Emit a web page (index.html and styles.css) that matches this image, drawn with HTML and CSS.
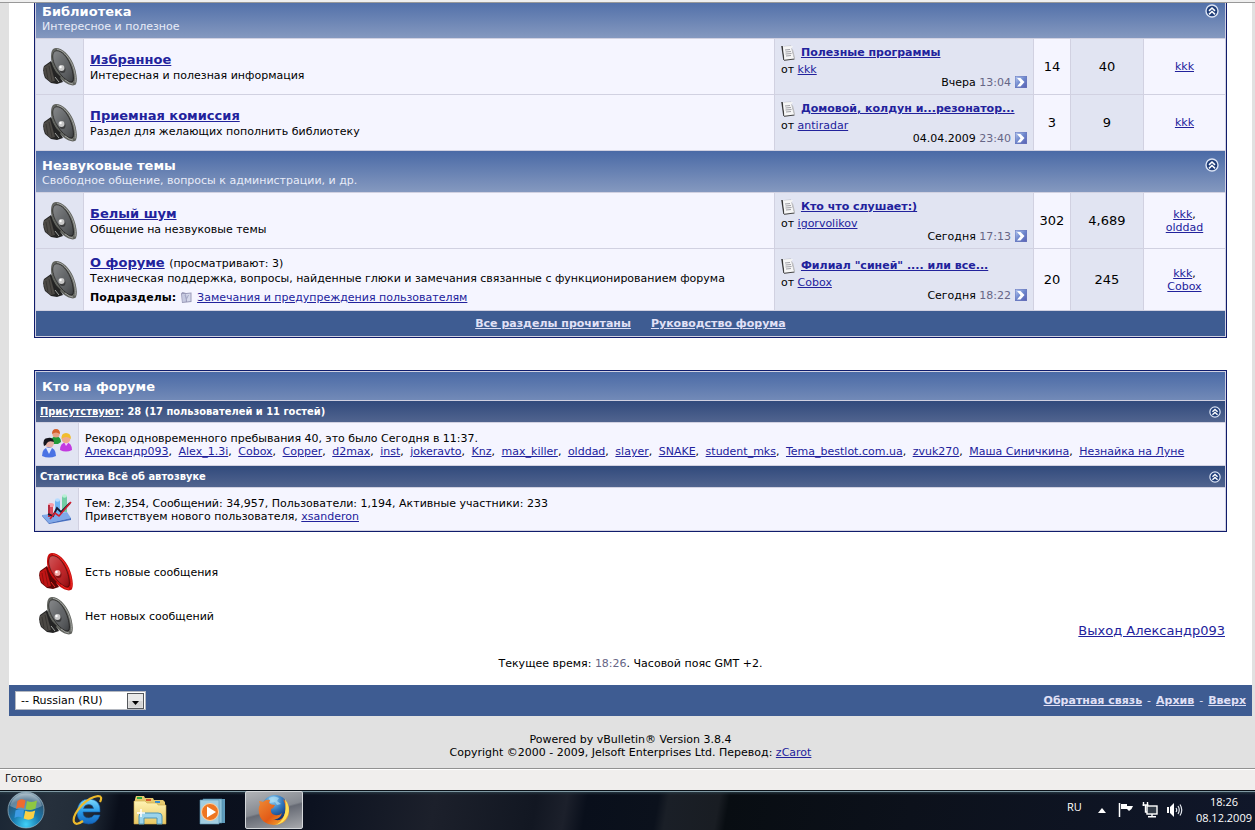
FILE: index.html
```html
<!DOCTYPE html>
<html lang="ru">
<head>
<meta charset="utf-8">
<title>Всё об автозвуке</title>
<link rel="stylesheet" href="styles.css">
</head>
<body>
<svg class="sprites" aria-hidden="true">
  <defs>
    <linearGradient id="cone" x1="0" y1="0" x2="1" y2="1">
      <stop offset="0" stop-color="#fff" stop-opacity=".32"/><stop offset=".5" stop-color="#fff" stop-opacity=".12"/><stop offset="1" stop-color="#000" stop-opacity=".25"/>
    </linearGradient>
    <linearGradient id="go" x1="0" y1="0" x2="1" y2="1">
      <stop offset="0" stop-color="#b4c8f0"/><stop offset=".5" stop-color="#6d86cc"/><stop offset="1" stop-color="#5a62b4"/>
    </linearGradient>
    <radialGradient id="orb" cx=".5" cy=".9" r=".85">
      <stop offset="0" stop-color="#3fd0f8"/><stop offset=".45" stop-color="#1878ad"/><stop offset=".8" stop-color="#2b5878"/><stop offset="1" stop-color="#8aa4b4"/>
    </radialGradient>
    <linearGradient id="ie" x1="0" y1="0" x2="0" y2="1">
      <stop offset="0" stop-color="#7fdcff"/><stop offset=".5" stop-color="#2a9be6"/><stop offset="1" stop-color="#1466bd"/>
    </linearGradient>
    <linearGradient id="folder" x1="0" y1="0" x2="0" y2="1">
      <stop offset="0" stop-color="#fff3b4"/><stop offset="1" stop-color="#e8c763"/>
    </linearGradient>
    <radialGradient id="globe" cx=".4" cy=".2" r=".8">
      <stop offset="0" stop-color="#8ed2f5"/><stop offset=".5" stop-color="#3277bd"/><stop offset="1" stop-color="#122c6c"/>
    </radialGradient>
    <linearGradient id="fox" x1="0" y1="0" x2="1" y2="1">
      <stop offset="0" stop-color="#ef8b36"/><stop offset=".55" stop-color="#e25a16"/><stop offset="1" stop-color="#f8c43a"/>
    </linearGradient>
  </defs>
  <symbol id="speaker" viewBox="0 0 34 38">
    <path class="spk-dark" d="M1 18 8 13 20 34 14 36 8 35 2 30Q-1 23 1 18Z"/>
    <path class="spk-mid" d="M1 19 7 15 12 33 8 34 3 30Q0 24 1 19Z"/>
    <path d="M3 20 5 31M6 18 9 33" stroke="#000" stroke-opacity=".25" fill="none"/>
    <path class="spk-rim" d="M13 0C20 0 26 7 30 15C33 22 35 31 33 36C31 39 25 37 20 33C13 27 8 17 8 9C8 4 9 0 13 0Z"/>
    <path class="spk-edge" fill="none" d="M14 1.500C20 2 25 8 29 16C32 23 33 30 32 34.500"/>
    <path class="spk-cone" d="M14 3C19 3 24 9 27 16C30 23 31 30 30 33C28 36 23 32 19 28C14 22 10 15 10 9C10 5 11 3 14 3Z"/>
    <path fill="url(#cone)" d="M14 3C19 3 24 9 27 16C30 23 31 30 30 33C28 36 23 32 19 28C14 22 10 15 10 9C10 5 11 3 14 3Z"/>
    <path class="spk-dark" d="M10 19 13 24 18 29 15 31Q11 26 10 19Z"/>
    <ellipse class="spk-dark" cx="19.500" cy="21.500" rx="3" ry="3.500" fill-opacity=".6"/>
    <circle class="spk-dome" cx="18.500" cy="20" r="3"/>
    <circle cx="17.500" cy="19" r="1.200" fill="#fff"/>
    <path class="spk-edge" fill="none" d="M12 29 16 34 M22 32Q27 36 30 36"/>
  </symbol>
  <symbol id="collapse" viewBox="0 0 14 14">
    <circle cx="7" cy="7" r="6" fill="#1f3d78" stroke="#dce4f4" stroke-width="1.400"/>
    <path d="M4 6.800 7 4 10 6.800M4 10.300 7 7.500 10 10.300" fill="none" stroke="#fff" stroke-width="1.600"/>
  </symbol>
  <symbol id="doc" viewBox="0 0 15 16">
    <path d="M1 1 3 15" stroke="#333" stroke-width="1.500"/>
    <path d="M3 1.500 10 1 13 14 3.500 15Z" fill="#fff" stroke="#a8a8ae" stroke-width=".7"/>
    <path d="M2 1.500 12 1 10 4 12 11 13.500 14 3.500 15.200Z" fill="#f6f6f6"/>
    <path d="M4 5 9 4.500M4.500 7 10 6.500M4.500 9 10.500 8.500M5 11 10 10.500" stroke="#a0a0a6"/>
    <path d="M3 15.300 13.500 14" stroke="#444" stroke-width="1"/>
    <path d="M11.500 4.500 13.500 13" stroke="#bbb"/>
  </symbol>
  <symbol id="goto" viewBox="0 0 12 12">
    <rect width="12" height="12" fill="#6b78bc"/><rect x=".5" y=".5" width="11" height="11" fill="url(#go)"/>
    <path d="M2 2H5.500L9.500 6 5.500 10.500H2L5.500 6.200Z" fill="#fff"/>
  </symbol>
  <symbol id="subforum" viewBox="0 0 11 11">
    <path d="M0 1.500 1.500 0 5 1 10.500.500V10L1 11Z" fill="#9a9ab8"/>
    <path d="M1 2 4.500 2 5 9.500 1.500 10Z" fill="#c6c9e0"/><path d="M5 2 9.500 1.500 9.500 9 6 9.500Z" fill="#d5d8ea"/>
    <path d="M4 3 5.500 7 7.500 3" fill="none" stroke="#a3a7c6"/>
  </symbol>
</svg>

<main class="viewport">
  <div class="page">
    <table class="forum boards">
      <colgroup><col class="c-icon"><col><col class="c-last"><col class="c-themes"><col class="c-posts"><col class="c-mod"></colgroup>
      <tbody>
        <tr><th class="tcat" colspan="6"><div class="cat-head"><div><h2>Библиотека</h2><p>Интересное и полезное</p></div><button class="collapse" aria-label="Свернуть"><svg><use href="#collapse"/></svg></button></div></th></tr>
        <tr class="board">
          <td class="alt2 status"><svg class="speaker"><use href="#speaker"/></svg></td>
          <td class="alt1 about"><div class="name"><a href="#">Избранное</a></div><div>Интересная и полезная информация</div></td>
          <td class="alt2 last"><div class="topic"><svg><use href="#doc"/></svg><a href="#">Полезные программы</a></div><div class="author">от <a href="#">kkk</a></div><div class="when"><span>Вчера <time>13:04</time></span><a href="#" aria-label="К последнему сообщению"><svg><use href="#goto"/></svg></a></div></td>
          <td class="alt1 num">14</td><td class="alt2 num">40</td><td class="alt1 mod"><a href="#">kkk</a></td>
        </tr>
        <tr class="board">
          <td class="alt2 status"><svg class="speaker"><use href="#speaker"/></svg></td>
          <td class="alt1 about"><div class="name"><a href="#">Приемная комиссия</a></div><div>Раздел для желающих пополнить библиотеку</div></td>
          <td class="alt2 last"><div class="topic"><svg><use href="#doc"/></svg><a href="#">Домовой, колдун и...резонатор...</a></div><div class="author">от <a href="#">antiradar</a></div><div class="when"><span>04.04.2009 <time>23:40</time></span><a href="#" aria-label="К последнему сообщению"><svg><use href="#goto"/></svg></a></div></td>
          <td class="alt1 num">3</td><td class="alt2 num">9</td><td class="alt1 mod"><a href="#">kkk</a></td>
        </tr>
      </tbody>
      <tbody>
        <tr><th class="tcat" colspan="6"><div class="cat-head"><div><h2>Незвуковые темы</h2><p>Свободное общение, вопросы к администрации, и др.</p></div><button class="collapse" aria-label="Свернуть"><svg><use href="#collapse"/></svg></button></div></th></tr>
        <tr class="board">
          <td class="alt2 status"><svg class="speaker"><use href="#speaker"/></svg></td>
          <td class="alt1 about"><div class="name"><a href="#">Белый шум</a></div><div>Общение на незвуковые темы</div></td>
          <td class="alt2 last"><div class="topic"><svg><use href="#doc"/></svg><a href="#">Кто что слушает:)</a></div><div class="author">от <a href="#">igorvolikov</a></div><div class="when"><span>Сегодня <time>17:13</time></span><a href="#" aria-label="К последнему сообщению"><svg><use href="#goto"/></svg></a></div></td>
          <td class="alt1 num">302</td><td class="alt2 num">4,689</td><td class="alt1 mod"><a href="#">kkk</a>,<br><a href="#">olddad</a></td>
        </tr>
        <tr class="board tall">
          <td class="alt2 status"><svg class="speaker"><use href="#speaker"/></svg></td>
          <td class="alt1 about"><div class="name"><a href="#">О форуме</a> <span>(просматривают: 3)</span></div><div>Техническая поддержка, вопросы, найденные глюки и замечания связанные с функционированием форума</div><div class="sub"><b>Подразделы:</b><svg><use href="#subforum"/></svg><a href="#">Замечания и предупреждения пользователям</a></div></td>
          <td class="alt2 last"><div class="topic"><svg><use href="#doc"/></svg><a href="#">Филиал "синей" .... или все...</a></div><div class="author">от <a href="#">Cobox</a></div><div class="when"><span>Сегодня <time>18:22</time></span><a href="#" aria-label="К последнему сообщению"><svg><use href="#goto"/></svg></a></div></td>
          <td class="alt1 num">20</td><td class="alt2 num">245</td><td class="alt1 mod"><a href="#">kkk</a>,<br><a href="#">Cobox</a></td>
        </tr>
      </tbody>
      <tfoot>
        <tr><td class="tfoot" colspan="6"><div class="foot-links"><a href="#">Все разделы прочитаны</a><a href="#">Руководство форума</a></div></td></tr>
      </tfoot>
    </table>

    <table class="forum online">
      <colgroup><col class="c-small"><col></colgroup>
      <tbody>
        <tr><th class="tcat title" colspan="2"><h2>Кто на форуме</h2></th></tr>
        <tr><th class="thead" colspan="2"><div class="bar"><span><a href="#">Присутствуют</a>: 28 (17 пользователей и 11 гостей)</span><button class="collapse small" aria-label="Свернуть"><svg><use href="#collapse"/></svg></button></div></th></tr>
        <tr>
          <td class="alt2 status"><svg class="pic" viewBox="0 0 30 30">
            <path d="M9 13Q9 8 14 7Q19 8 19 13L16 15H11Z" fill="#239b3a"/><circle cx="14" cy="5" r="3.600" fill="#e8a184"/><path d="M10 5Q10 0 14 0Q18 0 18 5Q14 2 10 5Z" fill="#d5602a"/>
            <path d="M18 21Q18 14 24 13Q30 14 30 21Q24 24 18 21Z" fill="#c23ae0"/><path d="M22 13 24 17 27 13Z" fill="#f4c8ff"/><circle cx="24" cy="10" r="4.300" fill="#efa98e"/><path d="M19.500 10Q19 4 24 4Q29 4 29 10Q24 6 19.500 10Z" fill="#f0bd2d"/>
            <path d="M0 27Q0 19 7 18Q14 19 14 27Q7 30 0 27Z" fill="#4a72e4"/><path d="M4 19 7 25 10 19Z" fill="#dfeaff"/><circle cx="7.500" cy="14" r="4.500" fill="#e7b1a6"/><path d="M2 17Q0 9 6 9Q11 8 12 13Q7 11 5 14Q4 17 2 17Z" fill="#15151c"/>
          </svg></td>
          <td class="alt1 info"><div>Рекорд одновременного пребывания 40, это было Сегодня в 11:37.</div><div class="users"><a href="#">Александр093</a>, <a href="#">Alex_1.3i</a>, <a href="#">Cobox</a>, <a href="#">Copper</a>, <a href="#">d2max</a>, <a href="#">inst</a>, <a href="#">jokeravto</a>, <a href="#">Knz</a>, <a href="#">max_killer</a>, <a href="#">olddad</a>, <a href="#">slayer</a>, <a href="#">SNAKE</a>, <a href="#">student_mks</a>, <a href="#">Tema_bestlot.com.ua</a>, <a href="#">zvuk270</a>, <a href="#">Маша Синичкина</a>, <a href="#">Незнайка на Луне</a></div></td>
        </tr>
        <tr><th class="thead" colspan="2"><div class="bar"><span>Статистика Всё об автозвуке</span><button class="collapse small" aria-label="Свернуть"><svg><use href="#collapse"/></svg></button></div></th></tr>
        <tr>
          <td class="alt2 status"><svg class="pic" viewBox="0 0 30 30">
            <path d="M0 21 25 18 29 24 7 29Z" fill="#7fa9ea"/><path d="M7 29 29 24V26L7 30 0 22V21Z" fill="#4770c0"/>
            <path d="M7 11V23L11 23V11Z" fill="#dc4d5f"/><ellipse cx="9" cy="11" rx="3" ry="2" fill="#f59ba6"/><path d="M6 11H8V23H6Z" fill="#b52a40"/>
            <path d="M13 6H18V21H13Z" fill="#6fb4f3"/><ellipse cx="15.500" cy="6" rx="2.500" ry="1.700" fill="#b7dcff"/>
            <path d="M20 2H25V18H20Z" fill="#72cda4"/><ellipse cx="22.500" cy="2" rx="2.500" ry="1.700" fill="#b8f0d4"/>
            <path d="M6 20 11 22 15 14 19 18 28 9" fill="none" stroke="#171a32" stroke-width="1.800"/><path d="M8 25 13 19 17 22 23 15 29 8" fill="none" stroke="#d31e2e" stroke-width="1.600"/>
          </svg></td>
          <td class="alt1 info"><div>Тем: 2,354, Сообщений: 34,957, Пользователи: 1,194, Активные участники: 233</div><div>Приветствуем нового пользователя, <a href="#">xsanderon</a></div></td>
        </tr>
      </tbody>
    </table>

    <div class="legend-row">
      <ul class="legend">
        <li><svg class="speaker hot"><use href="#speaker"/></svg>Есть новые сообщения</li>
        <li><svg class="speaker"><use href="#speaker"/></svg>Нет новых сообщений</li>
      </ul>
      <a class="logout" href="#">Выход Александр093</a>
    </div>

    <p class="clock-note">Текущее время: <time>18:26</time>. Часовой пояс GMT +2.</p>

    <div class="bottom">
      <div class="lang"><select aria-label="Язык"><option>-- Russian (RU)</option></select><svg viewBox="0 0 17 16" aria-hidden="true"><rect x=".5" y=".5" width="16" height="15" fill="#e9e9e9" stroke="#55585c"/><path d="M1.500 8H15.500V14.500H1.500Z" fill="#d4d4d4"/><path d="M5 8H12L8.500 12Z" fill="#000"/></svg></div>
      <nav><a href="#">Обратная связь</a><span>-</span><a href="#">Архив</a><span>-</span><a href="#">Вверх</a></nav>
    </div>
  </div>
  <footer class="copyright"><div>Powered by vBulletin® Version 3.8.4</div><div>Copyright ©2000 - 2009, Jelsoft Enterprises Ltd. Перевод: <a href="#">zCarot</a></div></footer>
</main>

<div class="statusbar">Готово</div>

<div class="taskbar">
  <button class="start" aria-label="Пуск"><svg viewBox="0 0 38 38">
    <circle cx="19" cy="19" r="18" fill="url(#orb)" stroke="#a9c3d0" stroke-opacity=".6"/>
    <path d="M3 15A16.500 16.500 0 0 1 35 15Q19 23 3 15Z" fill="#fff" opacity=".28"/>
    <path d="M10.500 10Q14 7 18.500 9.500L17 17.500Q13 15.500 9 18Z" fill="#ee6b30"/>
    <path d="M20 10Q25 12 30 9.500L28.500 17.500Q24 20 18.700 18Z" fill="#8fc742"/>
    <path d="M8.500 19.500Q13 17 17 19.200L15.500 27Q11.500 24.500 7.500 27Z" fill="#3d9be4"/>
    <path d="M18.300 19.800Q23 22 28.200 19.500L26.500 27Q22 30 16.700 27.500Z" fill="#fbd045"/>
  </svg></button>
  <button aria-label="Internet Explorer"><svg viewBox="0 0 34 34">
    <path d="M29 19H12Q12 25 18 25Q21 25 23 22H29Q26 31 17.500 31Q6 30 6 19Q7 6 18.500 6Q30 7 29 19ZM12.500 15.500H22.500Q22 11.500 17.800 11.500Q13.500 11.500 12.500 15.500Z" fill="url(#ie)" stroke="#1259a6" stroke-width=".6"/>
    <path d="M29 9Q32 3 27 3Q19 4 11 12Q1 23 3 29Q5 33 12 28" fill="none" stroke="#edba2b" stroke-width="2.200"/>
  </svg></button>
  <button aria-label="Проводник"><svg viewBox="0 0 34 34">
    <path d="M2 6 3 3H11L12 5H20L21 7H30L32 9V30H2Z" fill="#e5c96d"/>
    <path d="M4 4H9V6H4Z" fill="#2fa83f"/><path d="M13 6H18V8H13Z" fill="#d7562c"/><path d="M22 8H27V10H22Z" fill="#2f8bd4"/>
    <path d="M1 8H12L14 10H24L25 12H33V31H1Z" fill="url(#folder)" stroke="#c9a445" stroke-width=".6"/>
    <path d="M6 31V23Q6 20 9 20H25Q29 20 29 23V31H24V25H11V31Z" fill="#9bd3ea" stroke="#4c95b8"/>
    <path d="M8 16V24M4 20H12" stroke="#fff" stroke-width="1.500"/>
  </svg></button>
  <button aria-label="Проигрыватель"><svg viewBox="0 0 34 34">
    <path d="M10 6H30V30H10Z" fill="#5f9cbd"/><path d="M8 6H27V30H8Z" fill="#8fc3da" stroke="#4c86a6" stroke-width=".6"/><path d="M5 7H24V31H5Z" fill="#a2cee1" stroke="#5b95b3" stroke-width=".6"/>
    <circle cx="15" cy="19" r="8.500" fill="#ee7622" stroke="#ffd2a2"/><path d="M12 13.500V24.500L21 19Z" fill="#fff"/>
  </svg></button>
  <button class="active" aria-label="Firefox"><svg viewBox="0 0 34 34">
    <circle cx="18" cy="15" r="13" fill="url(#globe)"/>
    <path d="M12 5Q17 2 22 5L20 8 24 11 20 12 18 9 13 10Z" fill="#b6e0f2" opacity=".65"/>
    <path d="M2 8Q4 8 6 9Q9 6 13 7L12 10Q14 12 18 12Q17 15 14 16Q13 21 18 22Q22 23 25 20Q23 27 16 26Q25 30 28 20Q30 14 26 6Q33 11 32 19Q31 31 17 32Q4 31 2 20Q1 14 3 12Z" fill="url(#fox)"/>
    <path d="M28 6Q34 14 31 22Q27 31 18 32Q31 27 28 6Z" fill="#ffe055"/>
  </svg></button>
  <div class="tray">
    <span class="lang-id">RU</span>
    <svg class="more" width="8" height="5" viewBox="0 0 8 5"><path d="M0 5 4 0 8 5Z" fill="#fff"/></svg>
    <svg width="16" height="16" viewBox="0 0 16 16"><path d="M1.500 1V15" stroke="#fff" stroke-width="1.500"/><path d="M3 2H9V4H15L13.500 7 11 9 9 7H3Z" fill="#fff"/></svg>
    <svg width="16" height="16" viewBox="0 0 16 16"><rect x="5" y="4" width="10" height="8" fill="#333c48" stroke="#fff" stroke-width="1.400"/><path d="M10 12V14M6 14.700H14M1.500 0V4M5.500 0V4M.500 3H6.500M3.500 3V10H5" stroke="#fff" stroke-width="1.400" fill="none"/></svg>
    <svg width="17" height="16" viewBox="0 0 17 16"><path d="M1 5H3V11H1ZM4 5 8 1V15L4 11Z" fill="#fff"/><path d="M10 6Q11.500 8 10 10M12 4Q14.500 8 12 12M14 2.500Q17.500 8 14 13.500" fill="none" stroke="#e4e8ee" stroke-width="1.200"/></svg>
    <div class="clock"><span>18:26</span><span>08.12.2009</span></div>
  </div>
</div>
</body>
</html>
```
FILE: styles.css
```css
* { box-sizing: border-box; }
body {
  margin: 0;
  height: 100vh;
  display: flex;
  flex-direction: column;
  background: #e1e1e1;
  color: #000;
  font: 11px/13px "DejaVu Sans", sans-serif;
}
.sprites { position: absolute; width: 0; height: 0; }
svg { display: block; }
h2, p, ul { margin: 0; padding: 0; }
button { border: 0; padding: 0; background: none; }
a { color: #22229c; }
time { color: #666686; }

.viewport {
  flex: 1;
  min-height: 0;
  overflow: hidden;
  border-top: 1px solid #999;
  margin-top: 2px;
  box-shadow: 0 -2px #efefef;
}
.page { margin: 0 3px 0 9px; background: #fff; display: flow-root; }

/* forum tables */
.forum {
  width: calc(100% - 50px);
  margin: 0 25px;
  table-layout: fixed;
  border: 1px solid #101c6c;
  border-spacing: 1px;
  background: #d1d1e1;
}
.boards { margin-top: -8px; }
.online { margin-top: 32px; }
.c-icon { width: 47px; }
.c-last { width: 258px; }
.c-themes { width: 36px; }
.c-posts { width: 72px; }
.c-mod { width: 81px; }
.c-small { width: 42px; }
.forum td, .forum th { padding: 0 6px; text-align: left; font-weight: normal; }
.alt1 { background: #f5f5ff; }
.alt2 { background: #e1e4f2; }
.forum .tcat {
  padding: 7px 6px 5px;
  color: #fff;
  background: #869bc0 linear-gradient(#4a6aa6, #899cc1 44px);
}
.tcat h2 { font-size: 13px; line-height: 16px; font-weight: bold; }
.tcat p { color: #e8ecf8; }
.cat-head { display: flex; justify-content: space-between; align-items: flex-start; }
.collapse { width: 14px; height: 14px; }
.collapse svg { width: 100%; height: 100%; }
.collapse.small { width: 12px; height: 12px; }
.board { height: 55px; }
.board.tall { height: 61px; }
.forum .status { padding: 0; }
.status svg { margin: 0 auto; }
.name { line-height: 16px; }
.name a { font-size: 13px; font-weight: bold; }
.name span { margin-left: 1px; }
.sub { display: flex; gap: 5px; margin-top: 6px; align-items: center; }
.sub svg { width: 11px; height: 11px; }
.topic { display: flex; align-items: center; gap: 5px; height: 16px; font-weight: bold; white-space: nowrap; }
.topic svg { width: 15px; height: 16px; }
.author { height: 15px; line-height: 17px; }
.when { display: flex; justify-content: flex-end; align-items: center; gap: 4px; }
.when svg { width: 12px; height: 12px; }
.forum .num { padding: 0; text-align: center; font-size: 13px; }
.forum .mod { text-align: center; }
.forum .tfoot { height: 25px; background: #3e5c92; }
.foot-links { display: flex; justify-content: center; gap: 20px; font-weight: bold; }
.tfoot a, .bottom nav a { color: #e0e0f6; }
.forum .thead {
  height: 21px;
  padding: 0 4px;
  color: #fff;
  background: linear-gradient(#314a7c, #51648f);
  font: bold 11px/13px "DejaVu Sans Condensed", "DejaVu Sans", sans-serif;
}
.thead a { color: #fff; }
.bar { display: flex; justify-content: space-between; align-items: center; }
.pic { width: 30px; height: 30px; }
.forum .info { height: 42px; padding-top: 2px; }
.users a + a { margin-left: 3px; }

/* speakers */
.speaker {
  width: 34px;
  height: 38px;
  --rim: #62645f; --edge: #a2a4a1; --cone: #4d5053; --dark: #242424; --mid: #4c4945; --dome: #c8c8c8;
}
.speaker.hot { --rim: #c80d0d; --edge: #ee2e26; --cone: #b8080c; --dark: #5e0606; --mid: #c01414; --dome: #f4a8a4; }
.spk-rim { fill: var(--rim); }
.spk-edge { stroke: var(--edge); }
.spk-cone { fill: var(--cone); stroke: var(--dark); stroke-width: 1px; }
.spk-dark { fill: var(--dark); }
.spk-mid { fill: var(--mid); }
.spk-dome { fill: var(--dome); }

/* below the tables */
.legend-row { display: flex; justify-content: space-between; align-items: flex-end; margin: 18px 27px 0 30px; }
.legend { list-style: none; }
.legend li { display: flex; align-items: center; gap: 12px; height: 44px; }
.logout { font-size: 13px; line-height: 14px; }
.clock-note { margin-top: 19px; text-align: center; }
.bottom {
  display: flex;
  justify-content: space-between;
  align-items: center;
  margin-top: 15px;
  height: 31px;
  padding: 0 6px;
  background: #3e5c92;
  color: #e0e0f6;
}
.bottom nav { display: flex; gap: 5px; }
.bottom nav a { font-weight: bold; }
.lang { position: relative; }
.lang select {
  display: block;
  appearance: none;
  width: 131px;
  height: 19px;
  padding: 0 20px 0 5px;
  border: 1px solid #b4b8c0;
  border-radius: 0;
  background: #fff;
  color: #000;
  font: inherit;
}
.lang svg { position: absolute; right: 2px; top: 2px; width: 17px; height: 16px; pointer-events: none; }
.copyright { margin: 17px 3px 0 9px; text-align: center; }

/* browser status line and desktop taskbar */
.statusbar {
  height: 22px;
  padding: 0 5px;
  border-top: 1px solid #919191;
  background: #f0eeed;
  box-shadow: inset 0 1px #fff;
  font: 11px/18px "Open Sans", "Noto Sans", sans-serif;
}
.taskbar {
  display: flex;
  align-items: stretch;
  height: 40px;
  padding: 1px 3px 1px 7px;
  color: #fff;
  background: linear-gradient(#0a1118 0 1px, #7f98a2 1px 2px, rgba(45, 65, 75, .7) 2px, transparent 5px),
    linear-gradient(100deg, #1a2634 0, #26303c 50px, #222c38 90px, #090e1a 120px, #0c1220 310px, #1c202b 430px, #121722 530px, #1c202b 560px, #090f1b 580px, #0b111c 650px, #1a1f27 660px, #191d23 710px, #080d12 720px, #0c111b 900px, #10172a);
}
.taskbar button { width: 58px; display: flex; align-items: center; justify-content: center; margin-right: 4px; }
.taskbar button svg { width: 34px; height: 34px; }
.taskbar .start { width: 38px; margin-right: 14px; }
.taskbar .start svg { width: 38px; height: 38px; }
.taskbar .active {
  border: 1px solid #d4d7da;
  border-radius: 2px;
  background: linear-gradient(165deg, #b2b4b8, #858990 48%, #666a74 52%, #a7a9ad);
}
.tray { display: flex; align-items: center; gap: 8px; margin-left: auto; font: 11px/16px "Open Sans", "Noto Sans", sans-serif; }
.lang-id { margin: 0 8px 6px 0; }
.more { margin-right: 4px; }
.clock { display: flex; flex-direction: column; align-items: center; margin-left: 5px; }
```
